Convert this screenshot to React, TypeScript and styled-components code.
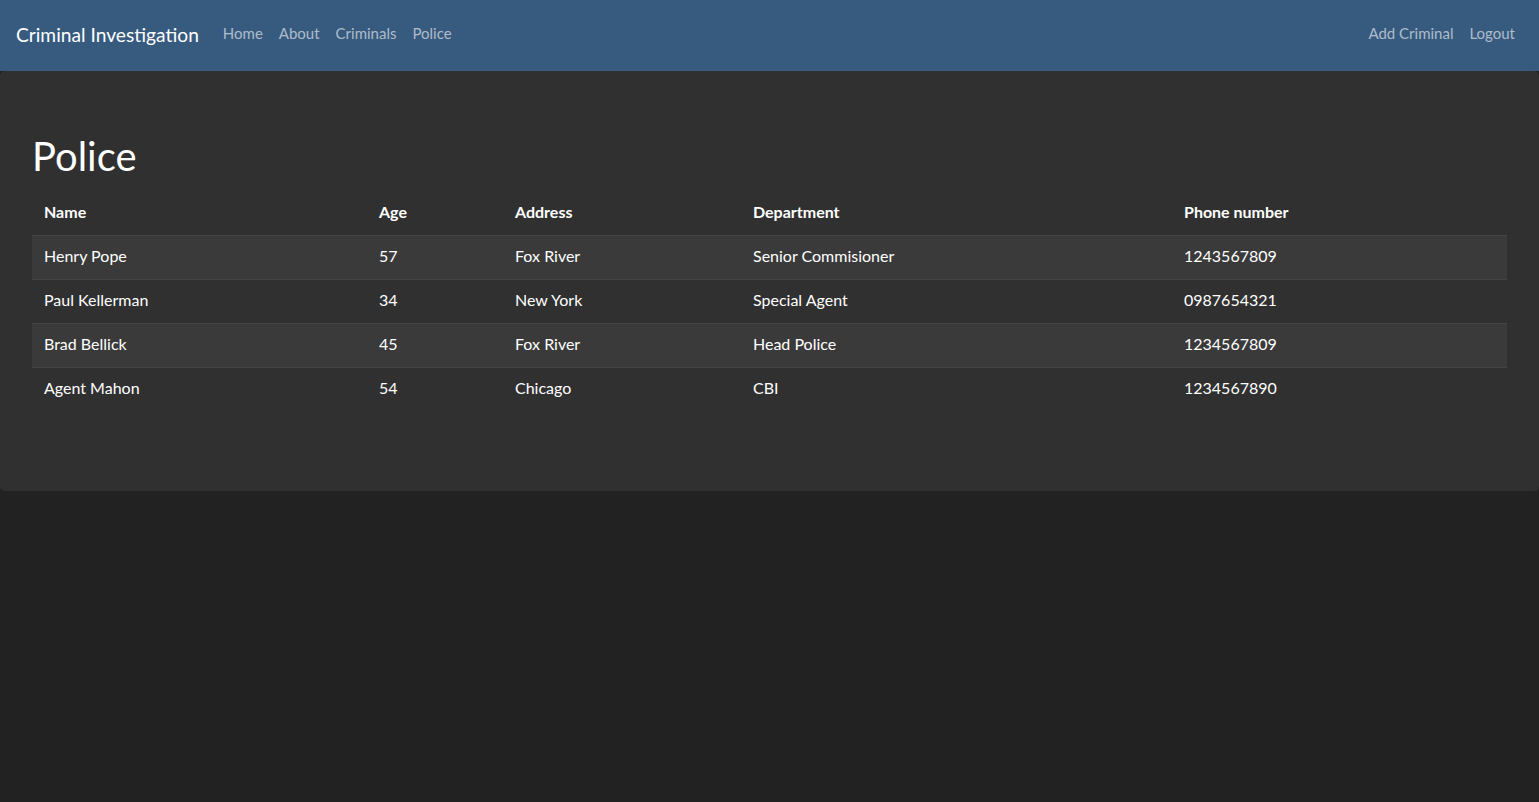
import React from "react";
import styled, { createGlobalStyle } from "styled-components";

const GlobalStyle = createGlobalStyle`
  html, body {
    margin: 0;
    padding: 0;
    background: #222222;
    color: #ffffff;
    font-family: Lato, "Noto Sans", "Liberation Sans", sans-serif;
    font-size: 15px;
    line-height: 1.5;
  }
  * { box-sizing: border-box; }
`;

const Navbar = styled.nav`
  display: flex;
  align-items: center;
  justify-content: space-between;
  height: 71px;
  padding: 0 16px 2px;
  background: #375a7f;
`;

const NavLeft = styled.div`
  display: flex;
  align-items: center;
`;

const Brand = styled.a`
  font-size: 19.2px;
  line-height: 28px;
  color: #ffffff;
  margin-right: 16px;
  padding: 5px 0;
  text-decoration: none;
  white-space: nowrap;
`;

const NavList = styled.ul`
  display: flex;
  list-style: none;
  margin: 0;
  padding: 0;
`;

const NavLink = styled.a`
  display: block;
  padding: 7px 8px 9px;
  font-size: 15px;
  line-height: 22.5px;
  color: rgba(255, 255, 255, 0.6);
  text-decoration: none;
`;

const Jumbotron = styled.section`
  background: #303030;
  border-radius: 4.8px;
  padding: 64px 32px;
  margin-bottom: 32px;
`;

const Title = styled.h1`
  margin: 0 0 14px;
  font-size: 40px;
  font-weight: 400;
  line-height: 42px;
  color: #ffffff;
`;

const Table = styled.table`
  width: 100%;
  border-collapse: collapse;
  margin-bottom: 16px;
  color: #ffffff;
  font-size: 16px;
`;

const Th = styled.th<{ $w: number }>`
  width: ${(p) => p.$w}px;
  text-align: left;
  font-weight: 700;
  padding: 10px 12px 14px;
  line-height: 19px;
  border-top: 1px solid transparent;
`;

const Row = styled.tr<{ $striped: boolean }>`
  background: ${(p) => (p.$striped ? "rgba(255,255,255,0.05)" : "transparent")};
`;

const Td = styled.td`
  padding: 10px 12px 14px;
  line-height: 19px;
  border-top: 1px solid #444444;
`;

const columns = [
  { label: "Name", w: 335 },
  { label: "Age", w: 136 },
  { label: "Address", w: 238 },
  { label: "Department", w: 431 },
  { label: "Phone number", w: 335 },
];

const rows = [
  ["Henry Pope", "57", "Fox River", "Senior Commisioner", "1243567809"],
  ["Paul Kellerman", "34", "New York", "Special Agent", "0987654321"],
  ["Brad Bellick", "45", "Fox River", "Head Police", "1234567809"],
  ["Agent Mahon", "54", "Chicago", "CBI", "1234567890"],
];

export default function App() {
  return (
    <>
      <GlobalStyle />
      <Navbar>
        <NavLeft>
          <Brand href="#">Criminal Investigation</Brand>
          <NavList>
            <li><NavLink href="#">Home</NavLink></li>
            <li><NavLink href="#">About</NavLink></li>
            <li><NavLink href="#">Criminals</NavLink></li>
            <li><NavLink href="#">Police</NavLink></li>
          </NavList>
        </NavLeft>
        <NavList>
          <li><NavLink href="#">Add Criminal</NavLink></li>
          <li><NavLink href="#">Logout</NavLink></li>
        </NavList>
      </Navbar>
      <Jumbotron>
        <Title>Police</Title>
        <Table>
          <thead>
            <tr>
              {columns.map((c) => (
                <Th key={c.label} $w={c.w}>{c.label}</Th>
              ))}
            </tr>
          </thead>
          <tbody>
            {rows.map((r, i) => (
              <Row key={i} $striped={i % 2 === 0}>
                {r.map((cell, j) => (
                  <Td key={j}>{cell}</Td>
                ))}
              </Row>
            ))}
          </tbody>
        </Table>
      </Jumbotron>
    </>
  );
}
